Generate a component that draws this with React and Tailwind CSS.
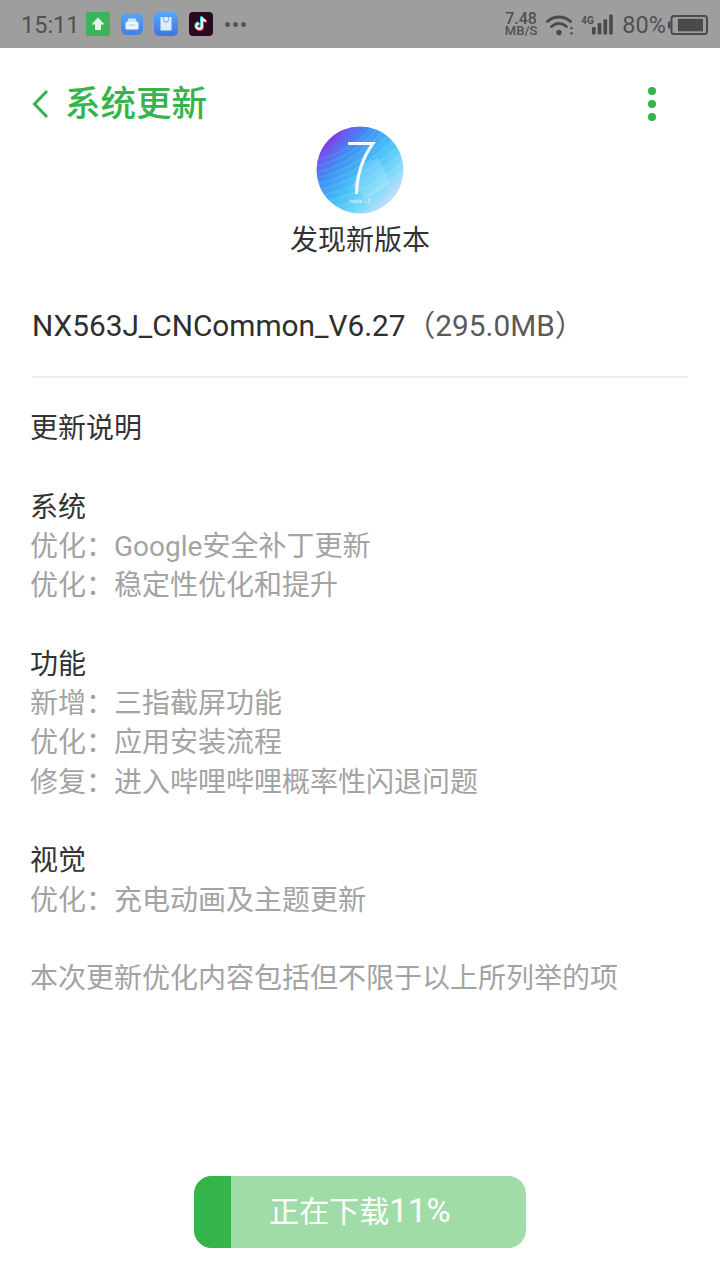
import React from "react";

const FONT = "font-['Roboto','Noto_Sans_CJK_SC',sans-serif]";

function Green() {
  return (
    <svg width="24" height="24" viewBox="0 0 24 24">
      <rect width="24" height="24" rx="2" fill="#3cb45c" />
      <path d="M12 5.500 18.500 12.500H15V18H9V12.500H5.500z" fill="#e4f6e9" />
    </svg>
  );
}
function Box() {
  return (
    <svg width="22" height="22" viewBox="0 0 22 22">
      <defs>
        <linearGradient id="bx" x1="0" y1="0" x2="0" y2="1">
          <stop offset="0" stopColor="#5aa6f3" />
          <stop offset="1" stopColor="#3f7fe6" />
        </linearGradient>
      </defs>
      <rect width="22" height="22" rx="6" fill="url(#bx)" />
      <path d="M6 9 7.500 5.500h7L16 9z" fill="#cfe4fb" />
      <rect x="4.500" y="9" width="13" height="7.500" rx="1" fill="#f0f6fe" />
      <rect x="8" y="11.500" width="6" height="1" fill="#a9c9f3" />
    </svg>
  );
}
function Bag() {
  return (
    <svg width="24" height="24" viewBox="0 0 24 24">
      <defs>
        <linearGradient id="bg" x1="0" y1="0" x2="0" y2="1">
          <stop offset="0" stopColor="#58a9f5" />
          <stop offset="1" stopColor="#3c74e3" />
        </linearGradient>
      </defs>
      <rect width="24" height="24" rx="5" fill="url(#bg)" />
      <path d="M6.500 5h11v13.500h-11z" fill="#dcebfb" />
      <path d="M9.500 5v2.500a2.500 2.500 0 0 0 5 0V5" fill="none" stroke="#7aa9ea" strokeWidth="1" />
    </svg>
  );
}
function Tok() {
  const d = "M13 5v9.200a2.800 2.800 0 1 1-2.800-2.800M13 5c.3 2.200 1.700 3.700 4 4";
  return (
    <svg width="24" height="24" viewBox="0 0 24 24">
      <rect width="24" height="24" rx="4" fill="#2a0a1e" />
      <path d={d} fill="none" stroke="#f2335b" strokeWidth="2.400" transform="translate(.8 .7)" />
      <path d={d} fill="none" stroke="#37e3e6" strokeWidth="2.400" transform="translate(-.8 -.6)" />
      <path d={d} fill="none" stroke="#ffffff" strokeWidth="1.800" />
    </svg>
  );
}
function Wifi() {
  return (
    <svg width="28" height="21" viewBox="0 0 28 21" fill="none" stroke="#4a4a4a" strokeLinecap="round">
      <path d="M1.500 6.500C8 .5 18 .5 24.500 6.500" strokeWidth="2.800" />
      <path d="M5.500 11.500c4.800-4 10.200-4 15 0" strokeWidth="2.800" />
      <circle cx="13" cy="17.500" r="2.700" fill="#4a4a4a" stroke="none" />
      <path d="M25.500 11.500l2 2.500h-4zM25.500 20l2-2.500h-4z" fill="#4a4a4a" stroke="none" />
    </svg>
  );
}
function Signal() {
  return (
    <svg width="22" height="21" viewBox="0 0 22 21" fill="#4a4a4a">
      <rect x="0" y="13" width="3.800" height="8" rx="1" />
      <rect x="6" y="9" width="3.800" height="12" rx="1" />
      <rect x="12" y="5" width="3.800" height="16" rx="1" />
      <rect x="18" y="0" width="3.800" height="21" rx="1" />
    </svg>
  );
}
function Battery() {
  return (
    <svg width="40" height="20" viewBox="0 0 40 20">
      <rect x="0" y="6.500" width="2.500" height="7" fill="#4a4a4a" />
      <rect x="3.500" y="1" width="35.500" height="18" rx="2.500" fill="none" stroke="#4a4a4a" strokeWidth="2" />
      <rect x="10" y="3.800" width="25" height="12.500" fill="#4a4a4a" />
    </svg>
  );
}
function Logo() {
  return (
    <svg width="88" height="88" viewBox="0 0 88 88">
      <defs>
        <linearGradient id="lg" x1="0.1" y1="0.14" x2="0.9" y2="0.86">
          <stop offset="0" stopColor="#9322ea" />
          <stop offset="0.1" stopColor="#6f55ee" />
          <stop offset="0.27" stopColor="#3f8cf3" />
          <stop offset="0.52" stopColor="#45bdf8" />
          <stop offset="0.75" stopColor="#74d8fa" />
          <stop offset="1" stopColor="#d3dffb" />
        </linearGradient>
        <clipPath id="cl"><circle cx="44" cy="44" r="43" /></clipPath>
      </defs>
      <circle cx="44" cy="44" r="43.500" fill="url(#lg)" />
      <g clipPath="url(#cl)" fill="none" stroke="#ffffff" strokeOpacity="0.1" strokeWidth="1.500">
        <path d="M0 34C18 30 40 20 58 0" />
        <path d="M0 40C20 36 44 24 64 0" />
        <path d="M0 46C22 42 48 28 70 2" />
        <path d="M0 52C24 48 52 32 76 6" />
        <path d="M0 58C26 54 56 36 82 10" />
        <path d="M0 64C28 60 60 42 88 16" />
        <path d="M2 70C30 66 64 48 90 24" />
        <path d="M6 76C34 72 68 54 92 32" />
        <path d="M12 82C40 78 72 60 94 40" />
      </g>
      <path d="M46 38 62 32 74 56 52 74 36 60z" fill="#ffffff" fillOpacity="0.16" />
      <path d="M32 17.500H57C47 31 41 48 40.500 68" fill="none" stroke="#ffffff" strokeOpacity="0.95" strokeWidth="3" />
      <text x="44" y="77" textAnchor="middle" fontSize="5" fill="#e8f6ff" fontFamily="Roboto, sans-serif">nubia 1.0</text>
    </svg>
  );
}

const lines = [
  ["更新说明", 0],
  ["", 0],
  ["系统", 0],
  ["优化：Google安全补丁更新", 1],
  ["优化：稳定性优化和提升", 1],
  ["", 0],
  ["功能", 0],
  ["新增：三指截屏功能", 1],
  ["优化：应用安装流程", 1],
  ["修复：进入哔哩哔哩概率性闪退问题", 1],
  ["", 0],
  ["视觉", 0],
  ["优化：充电动画及主题更新", 1],
  ["", 0],
  ["本次更新优化内容包括但不限于以上所列举的项", 1],
];

export default function App() {
  return (
    <div className={`flex h-[1280px] w-[720px] flex-col overflow-hidden bg-white ${FONT}`}>
      <div className="flex h-12 shrink-0 items-center bg-[#9e9e9e] pl-[21px] pr-[12px] text-[#505050]">
        <span className="mt-[4px] w-[57px] text-[23.500px] font-normal leading-none">15:11</span>
        <div className="ml-[8px] flex items-center gap-[11px]">
          <Green />
          <Box />
          <Bag />
          <Tok />
        </div>
        <div className="ml-[12px] flex gap-[3px]">
          <span className="h-[5px] w-[5px] rounded-full bg-[#555555]" />
          <span className="h-[5px] w-[5px] rounded-full bg-[#555555]" />
          <span className="h-[5px] w-[5px] rounded-full bg-[#555555]" />
        </div>
        <div className="ml-auto flex items-center">
          <div className="flex flex-col items-center text-[13px] font-medium leading-[12px]">
            <span className="text-[16px] leading-[13px]">7.48</span>
            <span>MB/S</span>
          </div>
          <div className="ml-[9px] mt-[2px]"><Wifi /></div>
          <div className="ml-[7px] flex w-[32px] items-start">
            <span className="w-[11px] text-[10px] font-bold leading-[14px]">4G</span>
            <Signal />
          </div>
          <span className="ml-[9px] mt-[4px] text-[23.500px] font-normal leading-none">80%</span>
          <div className="ml-[2px] mt-[2px]"><Battery /></div>
        </div>
      </div>

      <div className="flex h-[78px] shrink-0 items-start pl-[32px] pr-[64px] pt-[35px]">
        <svg width="18" height="30" viewBox="0 0 18 30" fill="none" stroke="#34b44a" strokeWidth="3" className="mt-[6px]">
          <path d="M15 2 2.500 15 15 28" />
        </svg>
        <span className="ml-[15px] text-[35.500px] font-medium leading-[42px] text-[#34b44a]">系统更新</span>
        <div className="ml-auto mt-[4px] flex flex-col gap-[5px]">
          <span className="h-[8px] w-[8px] rounded-full bg-[#34b44a]" />
          <span className="h-[8px] w-[8px] rounded-full bg-[#34b44a]" />
          <span className="h-[8px] w-[8px] rounded-full bg-[#34b44a]" />
        </div>
      </div>

      <div className="flex shrink-0 flex-col items-center">
        <Logo />
        <span className="mt-[7px] text-[28px] leading-[40px] text-[#333333]">发现新版本</span>
      </div>

      <div className="mx-[32px] mt-[45px] flex h-[72px] shrink-0 items-start border-b-2 border-[#eeeeee] text-[29.800px] leading-[40px] text-[#2e2e2e]">
        <span>NX563J_CNCommon_V6.27</span>
        <span className="text-[#5a5a5a]">（295.0MB）</span>
      </div>

      <div className="ml-[30px] mt-[31px] flex shrink-0 flex-col text-[28px] leading-[39.300px]">
        {lines.map(([t, muted], i) => (
          <div key={i} className={`h-[39.300px] ${muted ? "text-[#a3a3a3]" : "text-[#333333]"}`}>{t}</div>
        ))}
      </div>

      <div className="mb-[32px] mt-auto flex justify-center">
        <div className="relative flex h-[72px] w-[332px] items-center justify-center overflow-hidden rounded-[18px] bg-[#9fdca8]">
          <div className="absolute inset-y-0 left-0 w-[37px] bg-[#34b44a]" />
          <span className="relative pb-[4px] text-[30px] leading-none text-white">正在下载<span className="text-[33px]">11%</span></span>
        </div>
      </div>
    </div>
  );
}
